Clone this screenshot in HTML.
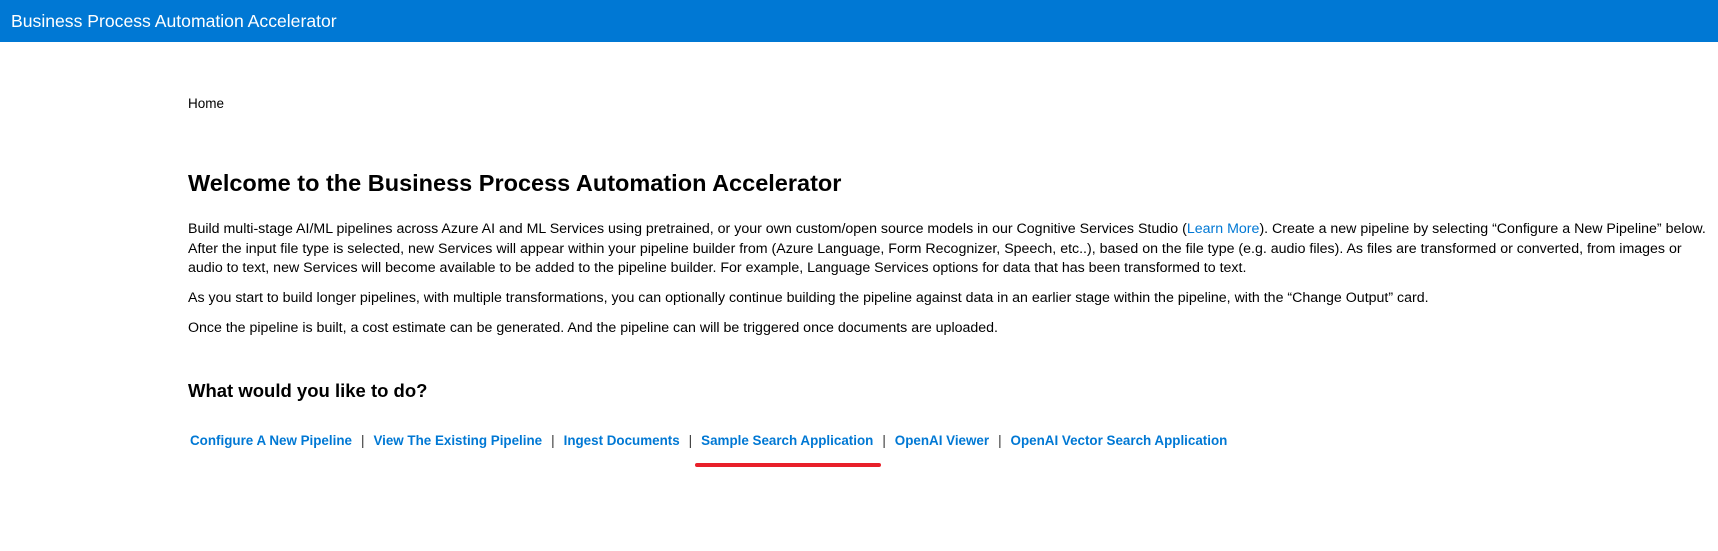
<!DOCTYPE html>
<html><head><meta charset="utf-8"><style>
html,body{margin:0;padding:0;background:#fff;width:1718px;height:551px;overflow:hidden;font-family:"Liberation Sans",sans-serif;color:#000}
.hdr{position:absolute;left:0;top:0;width:1718px;height:42px;background:#0078d4;color:#fff;font-size:17.6px;line-height:42px;padding-left:11px;box-sizing:border-box}
.home{position:absolute;left:188px;top:96px;font-size:13.5px}
h1{position:absolute;left:188px;top:165px;margin:0;font-size:23.5px;font-weight:bold;line-height:36px;white-space:nowrap}
.p{position:absolute;left:188px;font-size:14.2px;line-height:19.7px;white-space:nowrap}
.p a{color:#0078d4;text-decoration:none}
h2{position:absolute;left:188px;top:379px;margin:0;font-size:18.5px;font-weight:bold;line-height:24px}
.links{position:absolute;left:190px;top:432px;font-size:13.4px;font-weight:bold;line-height:18px;white-space:nowrap;color:#0078d4}
.links span.s{color:#333;font-weight:normal;margin:0 9px}
.red{position:absolute;left:695px;top:463px;width:186px;height:4px;background:#e8202a;border-radius:2px}
</style></head><body>
<div class="hdr">Business Process Automation Accelerator</div>
<div class="home">Home</div>
<h1>Welcome to the Business Process Automation Accelerator</h1>
<div class="p" style="top:220px">Build multi-stage AI/ML pipelines across Azure AI and ML Services using pretrained, or your own custom/open source models in our Cognitive Services Studio (<a>Learn More</a>). Create a new pipeline by selecting “Configure a New Pipeline” below.<br>After the input file type is selected, new Services will appear within your pipeline builder from (Azure Language, Form Recognizer, Speech, etc..), based on the file type (e.g. audio files). As files are transformed or converted, from images or<br>audio to text, new Services will become available to be added to the pipeline builder. For example, Language Services options for data that has been transformed to text.</div>
<div class="p" style="top:289px">As you start to build longer pipelines, with multiple transformations, you can optionally continue building the pipeline against data in an earlier stage within the pipeline, with the “Change Output” card.</div>
<div class="p" style="top:319px">Once the pipeline is built, a cost estimate can be generated. And the pipeline can will be triggered once documents are uploaded.</div>
<h2>What would you like to do?</h2>
<div class="links">Configure A New Pipeline<span class="s">|</span>View The Existing Pipeline<span class="s">|</span>Ingest Documents<span class="s">|</span>Sample Search Application<span class="s">|</span>OpenAI Viewer<span class="s">|</span>OpenAI Vector Search Application</div>
<div class="red"></div>
</body></html>
